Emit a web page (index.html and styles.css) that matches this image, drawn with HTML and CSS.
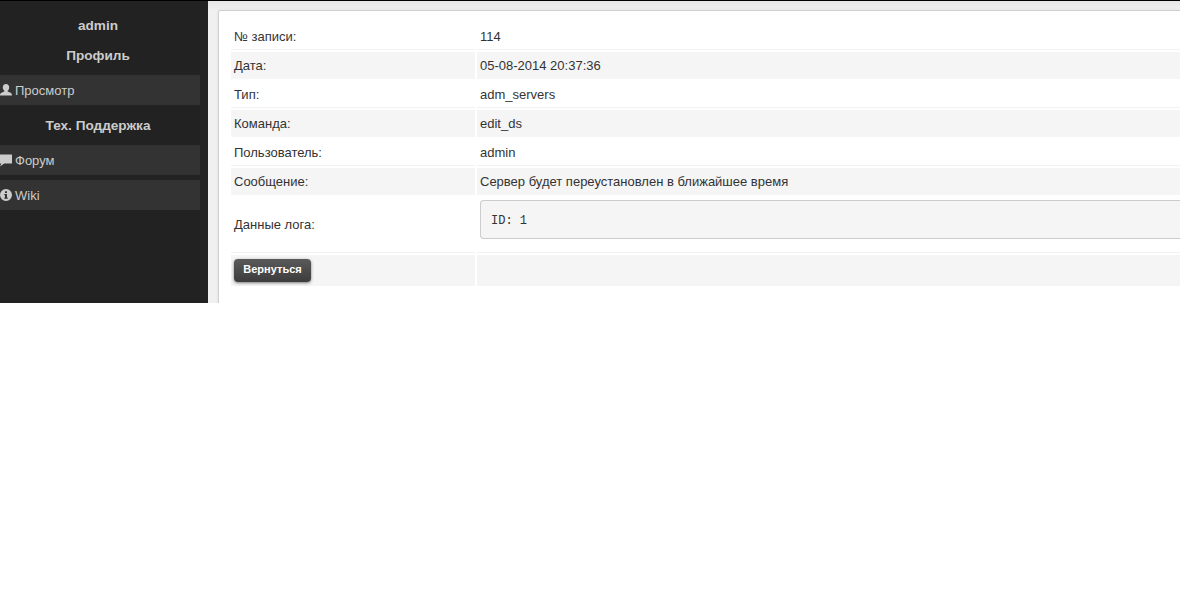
FILE: index.html
```html
<!DOCTYPE html>
<html lang="ru">
<head>
<meta charset="utf-8">
<title>Лог</title>
<link rel="stylesheet" href="styles.css">
</head>
<body>
<div class="shell">
  <aside class="sidebar">
    <div class="side-title side-user">admin</div>
    <div class="side-title">Профиль</div>
    <a class="side-link" href="#">
      <svg class="ico" viewBox="0 0 12 12"><path d="M6 0c2 0 3.200 1.400 3.200 3.400 0 1.300-.6 2.600-1.500 3.200v1c.4.500 2.800.9 3.800 1.800.4.400.5 1.200.5 2.100H0c0-.9.100-1.700.5-2.100 1-.9 3.400-1.300 3.800-1.800v-1C3.400 6 2.800 4.700 2.800 3.400 2.800 1.400 4 0 6 0z"/></svg>
      Просмотр</a>
    <div class="side-title">Тех. Поддержка</div>
    <a class="side-link side-gap" href="#">
      <svg class="ico" viewBox="0 0 12 12"><path d="M0 .5h12v9H4.200L0 12.500 1.300 9.500H0z"/></svg>
      Форум</a>
    <a class="side-link" href="#">
      <svg class="ico" viewBox="0 0 12 12"><path fill-rule="evenodd" d="M6 0a6 6 0 1 1 0 12A6 6 0 0 1 6 0zM5 2.300v1.600h2V2.300zM4.300 5v1.200H5v2.300h-.7v1.200h3.400V8.500H7V5z"/></svg>
      Wiki</a>
  </aside>
  <main class="main">
    <section class="card">
      <table class="log">
        <tr><td class="key">№ записи:</td><td>114</td></tr>
        <tr class="alt"><td class="key">Дата:</td><td>05-08-2014 20:37:36</td></tr>
        <tr><td class="key">Тип:</td><td>adm_servers</td></tr>
        <tr class="alt"><td class="key">Команда:</td><td>edit_ds</td></tr>
        <tr><td class="key">Пользователь:</td><td>admin</td></tr>
        <tr class="alt"><td class="key">Сообщение:</td><td>Сервер будет переустановлен в ближайшее время</td></tr>
        <tr class="data"><td class="key">Данные лога:</td><td><pre class="code">ID: 1</pre></td></tr>
        <tr class="alt last"><td class="key"><a class="btn" href="#">Вернуться</a></td><td></td></tr>
      </table>
    </section>
  </main>
</div>
</body>
</html>
```
FILE: styles.css
```css
html, body {
  margin: 0;
  padding: 0;
  background: #fff;
}
body {
  font-family: "Liberation Sans", Arial, sans-serif;
  font-size: 13px;
  color: #333;
  overflow: hidden;
}
.shell {
  display: flex;
  height: 303px;
  border-top: 1px solid #000;
  box-sizing: border-box;
  overflow: hidden;
}
.sidebar {
  flex: 0 0 208px;
  box-sizing: border-box;
  padding: 9px 8px 0 0;
  background: #222;
}
.side-title {
  box-sizing: border-box;
  height: 30px;
  padding-right: 4px;
  line-height: 32px;
  text-align: center;
  font-size: 13.6px;
  font-weight: bold;
  color: #ccc;
}
.sidebar > .side-user + .side-title {
  margin-bottom: 5px;
}
.side-link {
  display: flex;
  align-items: center;
  gap: 3px;
  height: 30px;
  margin-bottom: 5px;
  background: #333;
  color: #ccc;
  font-size: 13px;
  text-decoration: none;
}
.side-gap {
  margin-top: 5px;
}
.ico {
  flex: none;
  width: 12px;
  height: 12px;
  overflow: visible;
  fill: #ccc;
}
.main {
  flex: 1;
  min-width: 0;
  padding: 9px 0 0 10px;
  background: #f0f0f0;
  background-image: linear-gradient(#e6e6e6, #f0f0f0 10px);
}
.card {
  box-sizing: border-box;
  width: 1100px;
  height: 320px;
  padding: 10px 0 0 10px;
  background: #fff;
  border: 1px solid #d0d0d0;
  border-radius: 2px 0 0 0;
  box-shadow: 0 0 3px rgba(0, 0, 0, .08);
}
.log {
  width: 960px;
  table-layout: fixed;
  border-collapse: separate;
  border-spacing: 2px;
  margin: 0;
  font-size: 13px;
}
.log td {
  height: 26px;
  padding: 0 3px;
  border-bottom: 1px solid #f2f2f2;
  box-sizing: content-box;
  vertical-align: middle;
}
.log .key {
  width: 238px;
}
.log .alt td {
  background: #f5f5f5;
  border-bottom-color: #f5f5f5;
}
.log .data td {
  height: 55px;
}
.log .last td {
  height: 30px;
}
.code {
  box-sizing: border-box;
  height: 39px;
  width: 760px;
  margin: 0 0 10px;
  padding: 14px 10px 0;
  font-family: "Liberation Mono", "Courier New", monospace;
  font-size: 12px;
  line-height: 13px;
  color: #333;
  background: #f5f5f5;
  border: 1px solid #ccc;
  border-right: 0;
  border-radius: 4px 0 0 4px;
}
.btn {
  display: inline-block;
  box-sizing: border-box;
  width: 77px;
  height: 23px;
  line-height: 21px;
  text-align: center;
  font-size: 11px;
  font-weight: bold;
  color: #fff;
  text-decoration: none;
  background: linear-gradient(#5a5a5a, #3c3c3c);
  border-radius: 4px;
  box-shadow: 0 1px 3px rgba(0, 0, 0, .5);
}
```
